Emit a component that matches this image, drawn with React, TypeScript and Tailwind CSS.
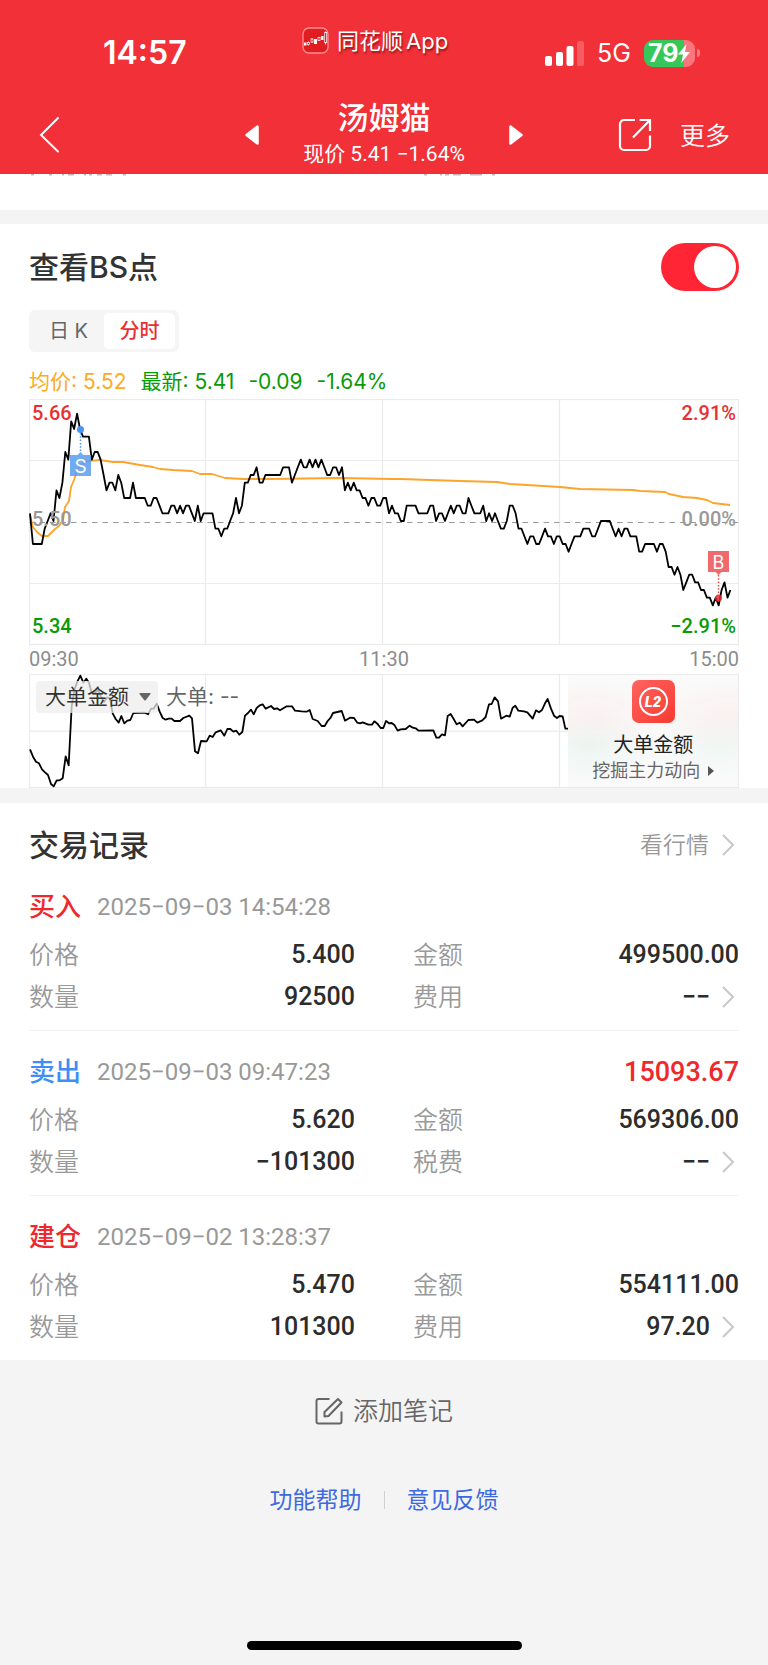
import { useState } from "react";

type Point = [number, number];

/* [minute since open, cents above or below the 5.50 reference price] */
const PRICE: Point[] = [
  [0, 1], [1, -3], [4, -3], [5, -1], [6, 0], [7, 1], [8, 0], [9, 4], [10, 3], [11, 5], [12, 9], [13, 8], [14, 13], [15, 12],
  [16, 14], [17, 12], [18, 11], [20, 11], [21, 8], [22, 9], [23, 9], [24, 8], [25, 6], [26, 4], [27, 5], [28, 5], [29, 4],
  [30, 6], [31, 5], [32, 3], [34, 3], [35, 5], [36, 3], [39, 3], [40, 2], [41, 2], [42, 3], [43, 3], [44, 2], [45, 1],
  [47, 1], [48, 2], [49, 2], [50, 1], [51, 2], [52, 1], [53, 2], [54, 2], [55, 1], [56, 0], [57, 2], [58, 0], [59, 1],
  [62, 1], [63, -1], [64, -1], [65, -2], [66, -1], [67, -1], [68, 0], [69, 1], [70, 3], [71, 1], [72, 2], [73, 5], [74, 5],
  [75, 6], [76, 6], [77, 7], [78, 5], [79, 5], [80, 6], [85, 6], [86, 7], [88, 7], [89, 5], [91, 7], [92, 8], [93, 7],
  [94, 7], [95, 8], [96, 7], [97, 8], [98, 7], [99, 8], [100, 7], [101, 6], [102, 6], [103, 7], [104, 7], [105, 6],
  [106, 7], [107, 4], [108, 5], [109, 4], [110, 5], [111, 4], [112, 4], [113, 3], [114, 3], [115, 2], [116, 3], [117, 3],
  [118, 2], [119, 2], [120, 3], [121, 3], [122, 1], [123, 2], [124, 1], [125, 1], [126, 0], [127, 0], [128, 2], [131, 2],
  [132, 1], [135, 1], [136, 2], [137, 2], [138, 0], [139, 1], [140, 1], [141, 0], [142, 1], [143, 2], [144, 1], [145, 2],
  [146, 2], [147, 1], [148, 1], [149, 3], [150, 2], [151, 1], [153, 1], [154, 2], [155, 0], [156, 1], [157, 0], [158, 1],
  [159, 0], [160, -1], [161, -1], [162, 0], [163, 2], [164, 2], [165, 1], [166, -1], [167, -1], [168, -2], [169, -3],
  [170, -2], [171, -2], [172, -3], [173, -3], [174, -2], [175, -1], [176, -2], [177, -2], [178, -3], [179, -2], [180, -2],
  [181, -3], [182, -3], [183, -4], [184, -3], [185, -2], [187, -2], [188, -1], [190, -1], [191, -2], [192, -2], [193, -1],
  [194, 0], [197, 0], [198, -1], [199, -2], [200, -1], [201, -2], [202, -1], [203, -1], [204, -2], [206, -2], [207, -4],
  [208, -4], [209, -3], [212, -3], [213, -4], [214, -3], [215, -3], [216, -4], [217, -6], [218, -6], [219, -7], [220, -6],
  [221, -7], [222, -9], [223, -8], [224, -7], [225, -7], [226, -8], [227, -8], [228, -9], [229, -9], [230, -10],
  [231, -10], [232, -11], [233, -10], [234, -11], [235, -9], [236, -8], [237, -10], [238, -9],
];

const AVERAGE =
  "1,116 4,128 8,133 13,137 19,137 26,130 30,127 34,121 36,108 40,102 42,88 45,81 48,71 53,65 59,62 71,61 84,63 94,63 111,66 124,68 131,70 144,71 163,72 171,75 183,75 196,79 214,80 241,80 311,79 364,80 371,80 431,82 468,83 481,85 498,86 531,88 551,90 604,91 611,92 636,93 640,95 654,98 668,99 678,101 684,104 701,106";

/* three drawing units per pixel */
const BIG_ORDERS =
  "30,328 39,350 48,365 57,370 66,388 75,397 84,405 93,432 101,439 110,421 119,421 128,415 137,349 146,376 155,200 163,150 172,125 181,107 190,128 199,116 207,128 214,155 225,158 234,150 243,170 252,186 262,172 270,175 278,220 287,237 296,248 304,228 313,250 322,242 331,240 340,219 375,218 384,223 393,206 401,206 410,191 419,215 428,234 437,239 446,236 455,236 463,243 480,243 490,234 508,227 516,235 525,334 534,340 543,303 560,304 569,287 578,291 587,277 602,271 613,287 622,267 631,267 640,275 649,272 658,284 667,276 675,227 684,219 693,209 701,223 710,204 719,196 728,193 737,206 753,198 762,207 771,205 780,211 800,199 816,199 825,212 845,214 860,215 869,210 878,237 893,243 905,258 914,258 923,243 932,233 939,219 965,213 975,242 990,233 1002,234 1012,248 1020,250 1028,247 1045,254 1056,254 1063,244 1072,251 1082,264 1090,264 1098,243 1107,250 1115,249 1124,256 1133,272 1142,268 1157,267 1169,257 1176,262 1187,265 1196,272 1240,271 1249,293 1257,293 1266,283 1275,286 1283,228 1292,222 1301,237 1310,253 1319,248 1328,259 1345,240 1362,239 1372,248 1387,241 1397,231 1407,193 1415,192 1424,172 1434,184 1443,236 1459,227 1469,230 1478,203 1486,197 1495,212 1512,214 1522,217 1538,236 1548,211 1557,217 1566,210 1575,190 1583,177 1593,206 1602,227 1611,234 1619,228 1628,229 1636,266 1644,266";

const pricePoints = PRICE.map(([m, c]) => `${(1 + m * 2.943).toFixed(1)},${(122 - c * 7.67).toFixed(1)}`).join(" ");

interface Trade {
  side: string;
  sideClass: string;
  time: string;
  profit?: string;
  price: string;
  quantity: string;
  amount: string;
  feeLabel: string;
  fee: string;
}

const TRADES: Trade[] = [
  { side: "买入", sideClass: "text-[#f0282d]", time: "2025−09−03 14:54:28", price: "5.400", quantity: "92500", amount: "499500.00", feeLabel: "费用", fee: "−−" },
  { side: "卖出", sideClass: "text-[#3f8ef5]", time: "2025−09−03 09:47:23", profit: "15093.67", price: "5.620", quantity: "−101300", amount: "569306.00", feeLabel: "税费", fee: "−−" },
  { side: "建仓", sideClass: "text-[#f0282d]", time: "2025−09−02 13:28:37", price: "5.470", quantity: "101300", amount: "554111.00", feeLabel: "费用", fee: "97.20" },
];

function Chevron() {
  return (
    <svg className="h-6 w-[18px] shrink-0" viewBox="0 0 18 24" fill="none" stroke="#c8c8c8" strokeWidth="2" aria-hidden="true">
      <path d="M2 2l10 10L2 22" />
    </svg>
  );
}

function StatusBar() {
  return (
    <div className="grid h-20 grid-cols-[302px_1fr_auto]">
      <div className="flex items-center pt-[26px] pl-[103px] text-[32px] leading-8 font-semibold">14:57</div>
      <div className="flex items-center gap-2 pt-px [text-shadow:1px_2px_2px_rgba(90,0,0,0.6)]">
        <svg className="size-[27px]" viewBox="0 0 27 27" fill="none" aria-hidden="true">
          <rect x="1" y="1" width="25" height="25" rx="6" fill="#e01e22" stroke="#ff8f92" strokeWidth="1.3" />
          <path d="M2 17h2.500" stroke="#fff" strokeWidth="3" />
          <path d="M6.500 14.500v4M10 11v5M17 10v4M23.500 4.500v13" stroke="#ffd5d5" strokeWidth="1" />
          <rect x="5.500" y="15.500" width="2" height="2" fill="#c9161b" stroke="#fff" strokeWidth=".7" />
          <rect x="9" y="12" width="2" height="3" fill="#c9161b" stroke="#fff" strokeWidth=".7" />
          <path d="M13.500 12v5" stroke="#fff" strokeWidth="3" />
          <rect x="16" y="10.500" width="2" height="3" fill="#c9161b" stroke="#fff" strokeWidth=".7" />
          <path d="M20.300 9v4" stroke="#fff" strokeWidth="2.400" />
          <rect x="22.700" y="5.500" width="2" height="10" fill="#c9161b" stroke="#fff" strokeWidth=".8" />
        </svg>
        <span className="flex gap-[3px] text-[22px] leading-7">
          <span>同花顺</span>
          <span>App</span>
        </span>
      </div>
      <div className="flex items-center pt-[26px] pr-[68px]">
        <svg className="h-[25px] w-[39px]" viewBox="0 0 39 25" fill="#fff" aria-hidden="true">
          <rect x="0" y="15" width="7" height="10" rx="2" />
          <rect x="11" y="11" width="7" height="14" rx="2" />
          <rect x="21.500" y="5" width="7" height="20" rx="2" />
          <rect x="32" y="0" width="7" height="25" rx="2" opacity=".22" />
        </svg>
        <span className="ml-[13px] w-[35px] text-[25px] leading-8">5G</span>
        <div className="ml-3 flex h-[27px] w-[51px] items-center rounded-[9px] bg-[linear-gradient(90deg,#35c759_79%,#f9777c_79%)] pl-[4px]">
          <span className="text-[25px] leading-7 font-bold">79</span>
          <svg className="-ml-px h-[19px] w-3 shrink-0" viewBox="0 0 12 19" fill="#fff" aria-hidden="true">
            <path d="M8.500 0L0 10.500h5L3.300 19 12 8H7z" />
          </svg>
        </div>
        <span className="ml-[2px] h-[8px] w-[3px] rounded-r-full bg-[#f9777c]" />
      </div>
    </div>
  );
}

function NavBar() {
  return (
    <nav className="grid h-[94px] grid-cols-[1fr_278px_1fr] items-center pt-4">
      <button type="button" aria-label="返回" className="justify-self-start pl-[39px]">
        <svg className="h-9 w-5" viewBox="0 0 20 36" fill="none" stroke="#fff" strokeWidth="2" strokeLinecap="round" aria-hidden="true">
          <path d="M19 1L2 18l17 16.500" />
        </svg>
      </button>
      <div className="flex items-center justify-between">
        <button type="button" aria-label="上一只">
          <svg className="h-5 w-[14px]" viewBox="0 0 14 20" aria-hidden="true">
            <path d="M12.500 1.500v17L1.500 10z" fill="#fff" stroke="#fff" strokeWidth="2.500" strokeLinejoin="round" />
          </svg>
        </button>
        <div className="text-center">
          <h1 className="text-[31px] leading-9 font-medium">汤姆猫</h1>
          <p className="pt-[2px] font-['Roboto','Noto_Sans_CJK_SC',sans-serif] text-[21px] leading-8">现价 5.41 −1.64%</p>
        </div>
        <button type="button" aria-label="下一只">
          <svg className="h-5 w-[14px]" viewBox="0 0 14 20" aria-hidden="true">
            <path d="M1.500 1.500v17L12.500 10z" fill="#fff" stroke="#fff" strokeWidth="2.500" strokeLinejoin="round" />
          </svg>
        </button>
      </div>
      <div className="flex items-center gap-7 justify-self-end pr-[38px]">
        <button type="button" aria-label="分享">
          <svg className="size-[34px]" viewBox="0 0 34 34" fill="none" stroke="#fff" strokeWidth="2.200" aria-hidden="true">
            <path d="M17 2H6a4 4 0 0 0-4 4v22a4 4 0 0 0 4 4h22a4 4 0 0 0 4-4V17.500" />
            <path d="M21.500 2H32v11M32 2L15 19.500" />
          </svg>
        </button>
        <button type="button" className="pt-[2px] text-[25px] leading-9 font-[350]">更多</button>
      </div>
    </nav>
  );
}

function GridLines() {
  return (
    <g stroke="#ebebeb" strokeWidth="1.200">
      <path d="M176.500 0V246M353.500 0V246M530.500 0V246M0 61.500H710M0 184.500H710" />
      <rect x=".5" y=".5" width="709" height="245" fill="none" />
    </g>
  );
}

function PriceChart() {
  return (
    <div className="relative font-['Roboto',sans-serif] text-[20px] leading-6 font-medium">
      <svg className="block w-full" viewBox="0 0 710 247" fill="none" role="img" aria-label="分时走势">
        <GridLines />
        <path d="M0 123.500H710" stroke="#999" strokeWidth="1.200" strokeDasharray="5.500 5" />
        <polyline points={AVERAGE} stroke="#fca42c" strokeWidth="1.800" strokeLinejoin="round" />
        <polyline points={pricePoints} stroke="#000" strokeWidth="1.800" strokeLinejoin="round" />
        <circle cx="51.500" cy="30.500" r="3.500" fill="#4a93f3" />
        <path d="M51.500 34V54" stroke="#4a93f3" strokeWidth="1.500" strokeDasharray="1.500 1.800" />
        <path d="M41 56h7.500l3-3 3 3H62v21H41z" fill="#5b9cf0" fillOpacity=".85" />
        <text x="51.500" y="73.500" textAnchor="middle" fill="#fff" fontSize="19" fontWeight="400" fontFamily="Inter, sans-serif">S</text>
        <path d="M689.500 176V196" stroke="#ee4a4d" strokeWidth="1.500" strokeDasharray="1.500 1.800" />
        <circle cx="689.500" cy="199" r="3.500" fill="#e9262c" fillOpacity=".85" />
        <path d="M679 152h21v21h-7.500l-3 3-3-3H679z" fill="#f06a6d" />
        <text x="689.500" y="169.500" textAnchor="middle" fill="#fff" fontSize="18" fontWeight="400" fontFamily="Inter, sans-serif">B</text>
      </svg>
      <span className="absolute top-[2px] left-[3px] text-[#e93030]">5.66</span>
      <span className="absolute top-[2px] right-[3px] text-[#e93030]">2.91%</span>
      <span className="absolute top-1/2 left-[3px] -translate-y-4 text-[#999]">5.50</span>
      <span className="absolute top-1/2 right-[3px] -translate-y-4 text-[#999]">0.00%</span>
      <span className="absolute bottom-2 left-[3px] text-[#079b07]">5.34</span>
      <span className="absolute right-[3px] bottom-2 text-[#079b07]">−2.91%</span>
    </div>
  );
}

function BigOrderChart() {
  return (
    <div className="relative">
      <svg className="block w-full" viewBox="27 102 2130 342" fill="none" role="img" aria-label="大单金额走势">
        <g stroke="#ebebeb" strokeWidth="3.600">
          <path d="M556.500 102V444M1087.500 102V444M1618.500 102V444M27 273.500H2157" />
          <rect x="28.500" y="103.500" width="2127" height="339" />
        </g>
        <polyline points={BIG_ORDERS} stroke="#000" strokeWidth="5.400" strokeLinejoin="round" />
      </svg>
      <div className="absolute top-[7px] left-[7px] flex items-center gap-2">
        <button type="button" className="flex h-8 items-center gap-[10px] rounded-[4px] bg-[#eeeeee]/75 pr-[7px] pl-[9px] text-[21px] leading-8 text-[#333]">
          大单金额
          <svg className="h-2 w-3" viewBox="0 0 12 8" fill="#666" aria-hidden="true">
            <path d="M1 0h10q1 0 .5 1L6.500 7.500h-1L.5 1Q0 0 1 0z" />
          </svg>
        </button>
        <span className="text-[21px] leading-8 text-[#666]">大单: --</span>
      </div>
      <a
        href="#level2"
        className="absolute inset-y-px right-px flex w-[24%] flex-col items-center bg-[#fafafa] bg-[radial-gradient(ellipse_at_15%_35%,rgba(255,200,195,0.18),transparent_35%),radial-gradient(ellipse_at_95%_35%,rgba(255,200,195,0.18),transparent_35%),radial-gradient(ellipse_at_12%_64%,rgba(180,225,205,0.2),transparent_35%),radial-gradient(ellipse_at_90%_62%,rgba(180,225,205,0.14),transparent_35%)] pt-[5px] pl-px"
      >
        <svg className="size-[43px] shrink-0" viewBox="0 0 43 43" fill="none" aria-hidden="true">
          <defs>
            <linearGradient id="l2" x1="0" y1="0" x2="1" y2="1">
              <stop stopColor="#ff6460" />
              <stop offset="1" stopColor="#f93a30" />
            </linearGradient>
          </defs>
          <rect width="43" height="43" rx="7" fill="url(#l2)" />
          <circle cx="21.500" cy="21.500" r="13.500" stroke="#fff" strokeWidth="2" />
          <text x="21" y="27" textAnchor="middle" fill="#fff" fontSize="15" fontWeight="900" fontStyle="italic" fontFamily="Roboto, sans-serif">L2</text>
        </svg>
        <span className="mt-2 text-[20px] leading-7 text-[#222]">大单金额</span>
        <span className="flex items-center gap-2 text-[18px] leading-6 whitespace-nowrap text-[#666]">
          挖掘主力动向
          <svg className="h-[10px] w-[6px]" viewBox="0 0 6 10" fill="#555" aria-hidden="true">
            <path d="M0 0l6 5-6 5z" />
          </svg>
        </span>
      </a>
    </div>
  );
}

function ChartSection() {
  const [shown, setShown] = useState(true);
  const [tab, setTab] = useState("分时");
  return (
    <section className="bg-white px-[29px] pt-[19px]">
      <div className="flex h-12 items-center justify-between">
        <h2 className="text-[30px] leading-10 font-medium text-[#333]">查看BS点</h2>
        <label className="cursor-pointer">
          <input type="checkbox" role="switch" aria-label="查看BS点" className="peer sr-only" checked={shown} onChange={() => setShown(!shown)} />
          <span className="flex h-12 w-[78px] items-center rounded-full bg-gray-300 px-[3px] peer-checked:justify-end peer-checked:bg-[#ff2535]">
            <span className="size-[42px] rounded-full bg-white" />
          </span>
        </label>
      </div>
      <div className="mt-[19px] inline-flex h-[42px] rounded-[6px] bg-[#f5f5f5] px-1 py-[3px]">
        {["日 K", "分时"].map((name) => (
          <button
            key={name}
            type="button"
            aria-pressed={tab === name}
            onClick={() => setTab(name)}
            className="w-[71px] rounded-[5px] text-[20px] leading-9 text-[#666] aria-pressed:bg-white aria-pressed:font-medium aria-pressed:text-[#e93030]"
          >
            {name}
          </button>
        ))}
      </div>
      <p className="flex h-[47px] items-center gap-[14px] pt-3 text-[21px] leading-[30px] text-[#079b07]">
        <span className="text-[#fbac1d]">均价: 5.52</span>
        <span>最新: 5.41</span>
        <span>-0.09</span>
        <span>-1.64%</span>
      </p>
      <PriceChart />
      <div className="flex h-7 items-center justify-between pb-[2px] font-['Roboto',sans-serif] text-[20px] leading-6 text-[#8c8c8c]">
        <span>09:30</span>
        <span>11:30</span>
        <span>15:00</span>
      </div>
      <BigOrderChart />
    </section>
  );
}

const LABEL = "text-[25px] font-[350] text-[#999]";
const VALUE = "font-['Roboto',sans-serif] text-[25px] font-medium text-[#2c2c2c]";

function TradeRecord({ trade }: { trade: Trade }) {
  return (
    <li className="border-b border-[#f3f3f3] pt-6 pb-3 last:border-b-0">
      <div className="flex h-[34px] items-center">
        <h3 className={`text-[26px] leading-[34px] font-medium ${trade.sideClass}`}>{trade.side}</h3>
        <time className="ml-4 font-['Roboto',sans-serif] text-[24px] leading-[34px] text-[#999]">{trade.time}</time>
        {trade.profit && <span className="ml-auto font-['Roboto',sans-serif] text-[27px] leading-[34px] font-medium text-[#f0282d]">{trade.profit}</span>}
      </div>
      <dl className="mt-[10px] grid grid-cols-2 gap-x-[58px] leading-[42px]">
        <div className="flex justify-between">
          <dt className={LABEL}>价格</dt>
          <dd className={VALUE}>{trade.price}</dd>
        </div>
        <div className="flex justify-between">
          <dt className={LABEL}>金额</dt>
          <dd className={VALUE}>{trade.amount}</dd>
        </div>
        <div className="flex justify-between">
          <dt className={LABEL}>数量</dt>
          <dd className={VALUE}>{trade.quantity}</dd>
        </div>
        <div className="flex justify-between">
          <dt className={LABEL}>{trade.feeLabel}</dt>
          <dd className={VALUE}>
            <a href="#fee" className="flex items-center gap-[11px]">
              {trade.fee}
              <Chevron />
            </a>
          </dd>
        </div>
      </dl>
    </li>
  );
}

export default function App() {
  return (
    <div className="flex min-h-screen flex-col bg-[#f4f4f4] font-['Inter','Noto_Sans_CJK_SC',sans-serif]">
      <header className="bg-[#f23038] text-white">
        <StatusBar />
        <NavBar />
      </header>
      <div className="h-9 bg-white px-[29px]">
        <svg className="block h-[2px] w-full" viewBox="0 0 710 2" stroke="#c9b9b9" strokeWidth="1.500" aria-hidden="true">
          <path d="M2 .8h3M20 .8h3M33 .8h2M39 .8h6M55 .8h2M60 .8h3M68 .8h5M77 .8h6M94 .8h3M395 .8h3M411 .8h2M416 .8h4M424 .8h8M441 .8h12M463 .8h3" />
        </svg>
      </div>
      <main className="mt-[14px]">
        <ChartSection />
        <section className="mt-[15px] bg-white px-[29px] pt-[22px]">
          <div className="flex h-10 items-center justify-between">
            <h2 className="text-[30px] leading-10 font-medium text-[#333]">交易记录</h2>
            <a href="#market" className="flex items-center gap-3 text-[23px] leading-8 font-[350] text-[#999]">
              看行情
              <Chevron />
            </a>
          </div>
          <ul className="pt-px">
            {TRADES.map((trade) => (
              <TradeRecord key={trade.time} trade={trade} />
            ))}
          </ul>
        </section>
      </main>
      <footer className="flex grow flex-col items-center pt-[33px] pb-[15px]">
        <button type="button" className="flex items-center gap-[10px] text-[25px] leading-9 font-[350] text-[#666]">
          <svg className="size-7" viewBox="0 0 28 28" fill="none" stroke="#666" strokeWidth="2" strokeLinejoin="round" aria-hidden="true">
            <path d="M14.500 2H3.500Q1.500 2 1.500 4v20.500q0 2 2 2h21q2 0 2-2V14.500" />
            <path d="M9.500 19.500v-4.500L23 2l3.500 3.500L13.500 19z" />
          </svg>
          添加笔记
        </button>
        <div className="mt-[53px] flex items-center gap-[22px] text-[23px] leading-9 text-[#3f69e0]">
          <a href="#help">功能帮助</a>
          <span className="h-[18px] w-px bg-[#d0d0d0]" />
          <a href="#feedback">意见反馈</a>
        </div>
        <div className="mt-auto h-[9px] w-[275px] rounded-full bg-black" />
      </footer>
    </div>
  );
}
